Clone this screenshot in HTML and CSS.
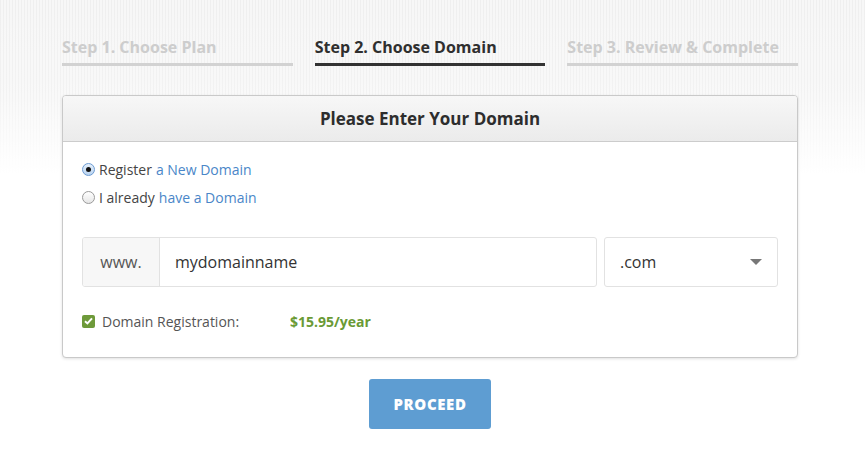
FILE: index.html
```html
<!DOCTYPE html>
<html>
<head>
<meta charset="utf-8">
<link rel="stylesheet" href="styles.css">
</head>
<body>
<div class="page">
  <div class="steps">
    <div class="step">Step 1. Choose Plan</div>
    <div class="step active">Step 2. Choose Domain</div>
    <div class="step">Step 3. Review &amp; Complete</div>
  </div>
  <div class="panel">
    <div class="panel-head">Please Enter Your Domain</div>
    <div class="panel-body">
      <div class="radio-row"><span class="radio checked"></span>Register <a class="link">a New Domain</a></div>
      <div class="radio-row"><span class="radio"></span>I already <a class="link">have a Domain</a></div>
      <div class="domain-row">
        <div class="input-group">
          <div class="addon">www.</div>
          <div class="field">mydomainname</div>
        </div>
        <div class="select">
          <span>.com</span>
          <span class="caret"></span>
        </div>
      </div>
      <div class="check-row">
        <span class="checkbox"><svg width="9" height="8" viewBox="0 0 9 8"><path d="M1 4.2 L3.4 6.4 L8 1.4" fill="none" stroke="#fff" stroke-width="2"/></svg></span>
        <span class="check-label">Domain Registration:</span>
        <span class="price">$15.95/year</span>
      </div>
    </div>
  </div>
  <div class="actions">
    <button class="proceed">PROCEED</button>
  </div>
</div>
</body>
</html>
```
FILE: styles.css
```css
html, body {
  margin: 0;
  padding: 0;
}
body {
  font-family: "Open Sans", "Liberation Sans", sans-serif;
  color: #333;
  background-color: #fff;
  background-image:
    linear-gradient(to bottom, rgba(255,255,255,0) 0px, rgba(255,255,255,0.2) 90px, #fff 175px),
    repeating-linear-gradient(to right, #efefef 0px, #efefef 1px, #f7f7f7 1px, #f7f7f7 3px);
  background-repeat: no-repeat;
  background-size: 100% 200px;
  min-height: 449px;
}
.page {
  width: 736px;
  margin-left: 62px;
  padding-top: 36px;
}
.steps {
  display: flex;
  gap: 22px;
}
.step {
  flex: 1;
  font-size: 16px;
  font-weight: 700;
  color: #cdcdcd;
  line-height: 22px;
  padding-bottom: 5px;
  border-bottom: 3px solid #d2d2d2;
}
.step.active {
  color: #2f2f2f;
  border-bottom-color: #333;
}
.panel {
  margin-top: 29px;
  border: 1px solid #c9c9c9;
  border-radius: 4px;
  background: #fff;
  box-shadow: 0 1px 3px rgba(0,0,0,0.12);
  overflow: hidden;
}
.panel-head {
  height: 45px;
  line-height: 45px;
  text-align: center;
  font-size: 17px;
  font-weight: 700;
  color: #2d2d2d;
  background: linear-gradient(to bottom, #f7f7f7, #ebebeb);
  border-bottom: 1px solid #cccccc;
}
.panel-body {
  padding: 13px 19px 26px 19px;
}
.radio-row {
  display: flex;
  align-items: center;
  height: 28px;
  font-size: 14px;
  color: #444;
}
.link {
  color: #4a86c8;
  margin-left: 4px;
}
.radio {
  width: 11px;
  height: 11px;
  border-radius: 50%;
  border: 1px solid #9a9a9a;
  background: linear-gradient(to bottom, #fff, #e6e6e6);
  margin-right: 4px;
  position: relative;
  box-sizing: content-box;
}
.radio.checked {
  border-color: #6c9bd2;
  background: linear-gradient(to bottom, #e6f0fb, #b9d3f0);
}
.radio.checked::after {
  content: "";
  position: absolute;
  width: 5px;
  height: 5px;
  border-radius: 50%;
  background: #111;
  left: 3px;
  top: 3px;
}
.domain-row {
  display: flex;
  gap: 7px;
  margin-top: 26px;
}
.input-group {
  display: flex;
  width: 515px;
  height: 50px;
  box-sizing: border-box;
  border: 1px solid #e2e2e2;
  border-radius: 3px;
  overflow: hidden;
}
.addon {
  width: 76px;
  background: #f7f7f7;
  border-right: 1px solid #e2e2e2;
  display: flex;
  align-items: center;
  justify-content: center;
  font-size: 16px;
  color: #555;
}
.field {
  flex: 1;
  display: flex;
  align-items: center;
  padding-left: 15px;
  font-size: 16px;
  color: #333;
}
.select {
  width: 174px;
  height: 50px;
  box-sizing: border-box;
  border: 1px solid #e2e2e2;
  border-radius: 3px;
  display: flex;
  align-items: center;
  justify-content: space-between;
  padding: 0 15px 0 15px;
  font-size: 16px;
  color: #333;
}
.caret {
  width: 0;
  height: 0;
  border-left: 6px solid transparent;
  border-right: 6px solid transparent;
  border-top: 6px solid #777;
}
.check-row {
  display: flex;
  align-items: center;
  height: 20px;
  margin-top: 24px;
  font-size: 14px;
}
.checkbox {
  width: 13px;
  height: 13px;
  background: #6e9a3a;
  border-radius: 2px;
  display: flex;
  align-items: center;
  justify-content: center;
  margin-right: 7px;
}
.check-label {
  color: #555;
  width: 188px;
}
.price {
  color: #6a9a35;
  font-weight: 700;
}
.actions {
  display: flex;
  justify-content: center;
  margin-top: 21px;
}
.proceed {
  width: 122px;
  height: 50px;
  border: none;
  border-radius: 3px;
  background: #5e9dd2;
  color: #fff;
  font-family: "Open Sans", "Liberation Sans", sans-serif;
  font-weight: 800;
  font-size: 15px;
  letter-spacing: 0.6px;
  padding: 0;
}
```
